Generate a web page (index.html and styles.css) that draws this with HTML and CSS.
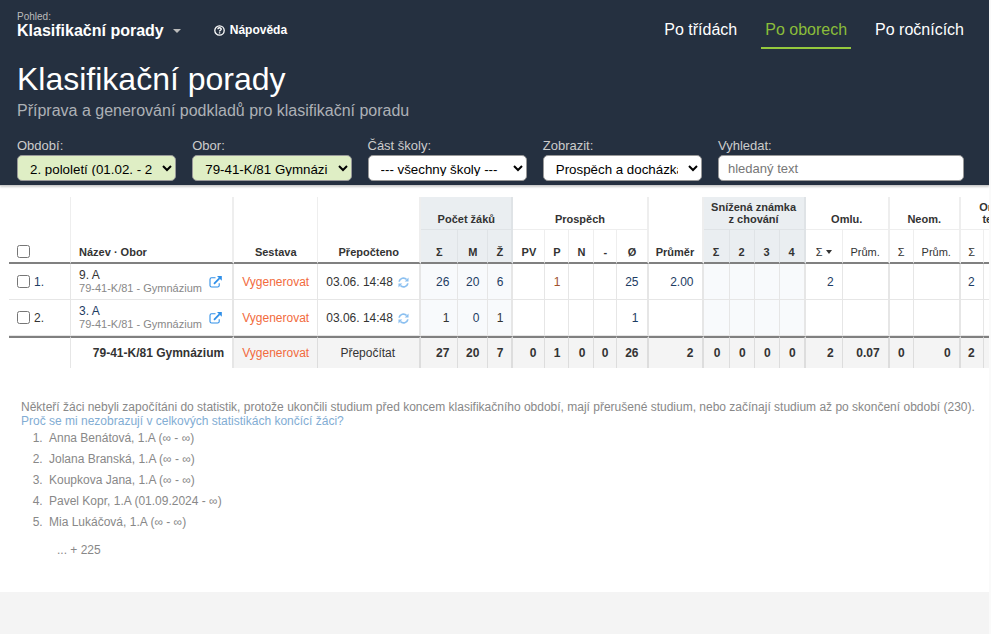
FILE: index.html
```html
<!DOCTYPE html>
<html lang="cs">
<head>
    <meta charset="UTF-8">
    <meta name="viewport" content="width=device-width, initial-scale=1.0">
    <title>Klasifikační porady</title>
    <link rel="stylesheet" href="styles.css">
</head>
<body>

<svg class="sprite" aria-hidden="true">
    <symbol id="i-open" viewBox="0 0 13 12">
        <path d="M6.5 1.8H2.6a1.6 1.6 0 0 0-1.6 1.6v6a1.6 1.6 0 0 0 1.6 1.6h6a1.6 1.6 0 0 0 1.6-1.6V7.2" fill="none" stroke="currentColor" stroke-width="1.1"/>
        <path d="M5 7.8 10.6 2.2" stroke="currentColor" stroke-width="1.8"/>
        <path d="M8 0h4.8v4.8z" fill="currentColor"/>
    </symbol>
    <symbol id="i-refresh" viewBox="0 0 12 12">
        <path d="M1.2 5A4.8 4.8 0 0 1 9.4 2.7M10.8 7a4.8 4.8 0 0 1-8.2 2.3" fill="none" stroke="currentColor" stroke-width="1.9"/>
        <path d="M11.5.6v4.2H7.3zM.5 11.4V7.2h4.2z" fill="currentColor"/>
    </symbol>
</svg>

<header class="top">
    <div class="bar">
        <div class="view">
            <span class="view-label">Pohled:</span>
            <button type="button" class="view-name">Klasifikační porady <i class="caret"></i></button>
        </div>
        <a class="help" href="#">
            <svg width="11" height="11" viewBox="0 0 11 11" aria-hidden="true">
                <circle cx="5.5" cy="5.5" r="4.7" fill="none" stroke="currentColor" stroke-width="1.3"/>
                <path d="M3.9 4.3c0-2 3.3-2 3.3-.1 0 1.1-1.6 1.1-1.6 2.3M5.6 7.3v1.3" fill="none" stroke="currentColor" stroke-width="1.4"/>
            </svg>
            Nápověda
        </a>
        <nav class="tabs">
            <a href="#">Po třídách</a>
            <a href="#" class="active">Po oborech</a>
            <a href="#">Po ročnících</a>
        </nav>
    </div>
    <h1>Klasifikační porady</h1>
    <p class="subtitle">Příprava a generování podkladů pro klasifikační poradu</p>
    <form class="filters">
        <div class="field">
            <label for="obdobi">Období:</label>
            <select id="obdobi" class="set"><option>2. pololetí (01.02. - 29.08.)</option></select>
        </div>
        <div class="field">
            <label for="obor">Obor:</label>
            <select id="obor" class="set"><option>79-41-K/81 Gymnázium</option></select>
        </div>
        <div class="field">
            <label for="skola">Část školy:</label>
            <select id="skola"><option>--- všechny školy ---</option></select>
        </div>
        <div class="field">
            <label for="zobrazit">Zobrazit:</label>
            <select id="zobrazit"><option>Prospěch a docházka</option></select>
        </div>
        <div class="field search">
            <label for="hledat">Vyhledat:</label>
            <input type="text" id="hledat" placeholder="hledaný text">
        </div>
    </form>
</header>

<main>
    <div class="table-wrap">
        <table>
            <colgroup>
                <col class="w62"><col class="w163"><col class="w84"><col class="w103">
                <col class="w37"><col class="w30"><col class="w25">
                <col class="w32"><col class="w24"><col class="w25"><col class="w23"><col class="w31">
                <col class="w55">
                <col class="w26"><col class="w25"><col class="w25"><col class="w26">
                <col class="w37"><col class="w47"><col class="w24"><col class="w47"><col class="w23"><col class="w52">
            </colgroup>
            <thead>
                <tr class="groups">
                    <th rowspan="2" class="left check"><input type="checkbox" aria-label="Vybrat vše"></th>
                    <th rowspan="2" class="left end">Název · Obor</th>
                    <th rowspan="2">Sestava</th>
                    <th rowspan="2" class="end">Přepočteno</th>
                    <th colspan="3" class="group tint end">Počet žáků</th>
                    <th colspan="5" class="group end">Prospěch</th>
                    <th rowspan="2" class="end">Průměr</th>
                    <th colspan="4" class="group tint end">Snížená známka<br>z chování</th>
                    <th colspan="2" class="group end">Omlu.</th>
                    <th colspan="2" class="group end">Neom.</th>
                    <th colspan="2" class="group end">Omluv.<br>teorie</th>
                </tr>
                <tr>
                    <th class="tint">Σ</th>
                    <th class="tint">M</th>
                    <th class="tint end">Ž</th>
                    <th>PV</th>
                    <th>P</th>
                    <th>N</th>
                    <th>-</th>
                    <th class="end">Ø</th>
                    <th class="tint">Σ</th>
                    <th class="tint">2</th>
                    <th class="tint">3</th>
                    <th class="tint end">4</th>
                    <th class="light">Σ <i class="caret dark"></i></th>
                    <th class="light end">Prům.</th>
                    <th class="light">Σ</th>
                    <th class="light end">Prům.</th>
                    <th class="light">Σ</th>
                    <th class="light end"></th>
                </tr>
            </thead>
            <tbody>
                <tr>
                    <td class="left check"><input type="checkbox" id="r1"><label for="r1" class="link">1.</label></td>
                    <td class="left end">
                        <div class="name">
                            <div>9. A<small>79-41-K/81 - Gymnázium</small></div>
                            <a href="#" class="open" aria-label="Otevřít"><svg width="13" height="12"><use href="#i-open"/></svg></a>
                        </div>
                    </td>
                    <td class="mid"><a href="#" class="gen">Vygenerovat</a></td>
                    <td class="mid end">03.06. 14:48 <svg class="refresh" width="11" height="11"><use href="#i-refresh"/></svg></td>
                    <td class="pale link">26</td>
                    <td class="pale link">20</td>
                    <td class="pale link end">6</td>
                    <td></td>
                    <td class="mark">1</td>
                    <td></td>
                    <td></td>
                    <td class="link end">25</td>
                    <td class="link end">2.00</td>
                    <td class="pale"></td>
                    <td class="pale"></td>
                    <td class="pale"></td>
                    <td class="pale end"></td>
                    <td class="link">2</td>
                    <td class="end"></td>
                    <td></td>
                    <td class="end"></td>
                    <td class="link">2</td>
                    <td class="end"></td>
                </tr>
                <tr>
                    <td class="left check"><input type="checkbox" id="r2"><label for="r2">2.</label></td>
                    <td class="left end">
                        <div class="name">
                            <div><span class="link">3. A</span><small>79-41-K/81 - Gymnázium</small></div>
                            <a href="#" class="open" aria-label="Otevřít"><svg width="13" height="12"><use href="#i-open"/></svg></a>
                        </div>
                    </td>
                    <td class="mid"><a href="#" class="gen">Vygenerovat</a></td>
                    <td class="mid end">03.06. 14:48 <svg class="refresh" width="11" height="11"><use href="#i-refresh"/></svg></td>
                    <td class="pale">1</td>
                    <td class="pale link">0</td>
                    <td class="pale end">1</td>
                    <td></td>
                    <td></td>
                    <td></td>
                    <td></td>
                    <td class="link end">1</td>
                    <td class="end"></td>
                    <td class="pale"></td>
                    <td class="pale"></td>
                    <td class="pale"></td>
                    <td class="pale end"></td>
                    <td></td>
                    <td class="end"></td>
                    <td></td>
                    <td class="end"></td>
                    <td></td>
                    <td class="end"></td>
                </tr>
            </tbody>
            <tfoot>
                <tr>
                    <td class="blank"></td>
                    <td class="blank end">79-41-K/81 Gymnázium</td>
                    <td class="mid light"><a href="#" class="gen">Vygenerovat</a></td>
                    <td class="mid light end">Přepočítat</td>
                    <td>27</td>
                    <td>20</td>
                    <td class="end">7</td>
                    <td>0</td>
                    <td>1</td>
                    <td>0</td>
                    <td>0</td>
                    <td class="end">26</td>
                    <td class="end">2</td>
                    <td>0</td>
                    <td>0</td>
                    <td>0</td>
                    <td class="end">0</td>
                    <td>2</td>
                    <td class="end">0.07</td>
                    <td>0</td>
                    <td class="end">0</td>
                    <td>2</td>
                    <td class="end"></td>
                </tr>
            </tfoot>
        </table>
    </div>

    <section class="note">
        <p>Někteří žáci nebyli započítáni do statistik, protože ukončili studium před koncem klasifikačního období, mají přerušené studium, nebo začínají studium až po skončení období (230).</p>
        <a href="#">Proč se mi nezobrazují v celkových statistikách končící žáci?</a>
        <ol>
            <li>Anna Benátová, 1.A (∞ - ∞)</li>
            <li>Jolana Branská, 1.A (∞ - ∞)</li>
            <li>Koupkova Jana, 1.A (∞ - ∞)</li>
            <li>Pavel Kopr, 1.A (01.09.2024 - ∞)</li>
            <li>Mia Lukáčová, 1.A (∞ - ∞)</li>
        </ol>
        <p class="more">... + 225</p>
    </section>
</main>

</body>
</html>
```
FILE: styles.css
```css
* {
    box-sizing: border-box;
}

html {
    background-color: #fafafa;
}

body {
    margin: 0 2px 0 0;
    min-height: 100vh;
    background-color: #f4f4f4;
    color: #333;
    font-family: "Liberation Sans", Arial, sans-serif;
    font-size: 12px;
}

a {
    color: inherit;
    text-decoration: none;
}

.sprite {
    display: none;
}

.top {
    background-color: #253040;
    color: #fff;
    padding: 11px 17px 4px;
    border-bottom: 1px solid #ccc;
    box-shadow: 0 1px 2px rgba(0, 0, 0, 0.2);
    position: relative;
}

.bar {
    display: flex;
    align-items: flex-start;
    height: 49px;
}

.view-label {
    display: block;
    font-size: 10px;
    line-height: 12px;
    color: #bbb;
}

.view-name {
    display: flex;
    align-items: center;
    gap: 9px;
    padding: 0;
    border: none;
    background: none;
    color: #fff;
    font-family: inherit;
    font-size: 16px;
    font-weight: bold;
    line-height: 16px;
}

.caret {
    display: inline-block;
    border: 4px solid transparent;
    border-top-color: #bbb;
    border-bottom: none;
}

.caret.dark {
    border-width: 4px 3px 0;
    border-top-color: #333;
    vertical-align: 2px;
}

.help {
    display: flex;
    align-items: center;
    gap: 5px;
    margin-left: 33px;
    padding-top: 12px;
    font-weight: bold;
    line-height: 14px;
}

.tabs {
    display: flex;
    gap: 20px;
    margin-left: auto;
    margin-right: 4px;
}

.tabs a {
    padding: 9px 4px 7px;
    font-size: 16px;
    line-height: 20px;
}

.tabs .active {
    color: #8bbd3a;
    border-bottom: 2px solid #95c93d;
}

h1 {
    margin: 0;
    font-size: 32px;
    font-weight: normal;
    line-height: 38px;
}

.subtitle {
    margin: 3px 0 17px;
    font-size: 16px;
    line-height: 20px;
    color: #adb1b6;
}

.filters {
    display: flex;
    gap: 16px;
    padding-right: 8px;
}

.field {
    flex: 1;
    min-width: 0;
}

.field.search {
    flex: 0 0 246px;
}

.field label {
    display: block;
    margin-bottom: 2px;
    font-size: 13px;
    line-height: 15px;
    color: #ccc;
}

.field select,
.field input {
    display: block;
    width: 100%;
    height: 26px;
    border: 1px solid #999;
    border-radius: 5px;
    background-color: #fff;
    color: #000;
    font-family: inherit;
}

.field select {
    padding: 5px 7px 4px 8px;
}

.field .set {
    background-color: #dfeec5;
}

.field input {
    padding: 0 9px;
    font-size: 13px;
}

.field input::placeholder {
    color: #777;
}

main {
    background-color: #fff;
    padding: 11px 0 35px;
}

.table-wrap {
    margin-left: 9px;
    overflow: hidden;
}

table {
    width: 1027px;
    table-layout: fixed;
    border-collapse: separate;
    border-spacing: 0;
}

.w23 { width: 23px; }
.w24 { width: 24px; }
.w25 { width: 25px; }
.w26 { width: 26px; }
.w30 { width: 30px; }
.w31 { width: 31px; }
.w32 { width: 32px; }
.w37 { width: 37px; }
.w47 { width: 47px; }
.w52 { width: 52px; }
.w55 { width: 55px; }
.w62 { width: 62px; }
.w84 { width: 84px; }
.w103 { width: 103px; }
.w163 { width: 163px; }

th,
td {
    padding: 0;
    border-right: 1px solid #e6e6e6;
    white-space: nowrap;
}

th.end,
td.end {
    border-right-width: 2px;
}

th {
    padding-bottom: 4px;
    border-right-color: #eee;
    border-bottom: 2px solid #808080;
    font-size: 11px;
    line-height: 12px;
    text-align: center;
    vertical-align: bottom;
}

thead tr {
    height: 34px;
}

thead .groups {
    height: 33px;
}

thead .group {
    border-bottom: 1px solid #eee;
}

.tint {
    background-color: #eaeef1;
    border-right-color: #dfe3e6;
}

thead .tint.group {
    border-bottom-color: #dfe3e6;
}

.light {
    font-weight: normal;
}

td {
    height: 36px;
    padding-right: 8px;
    border-bottom: 1px solid #e6e6e6;
    text-align: right;
}

.pale {
    background-color: #f8fafc;
}

.link {
    color: #1d3c63;
}

.mark {
    color: #a0522d;
}

th.left,
td.left {
    padding-left: 8px;
    text-align: left;
}

td.mid {
    padding-right: 0;
    text-align: center;
}

td.mid.end {
    padding-right: 2px;
}

.check input {
    width: 13px;
    height: 13px;
    margin: 0 4px 0 0;
    vertical-align: middle;
}

.check label {
    vertical-align: middle;
}

.name {
    display: flex;
    align-items: center;
    justify-content: space-between;
    padding-right: 2px;
    line-height: 13px;
}

.name small {
    display: block;
    font-size: 11px;
    color: #888;
}

.open {
    color: #2f8fe8;
}

.open svg {
    display: block;
}

.refresh {
    margin-left: 2px;
    color: #8cc0f0;
    vertical-align: -2px;
}

.gen {
    color: #f26b3d;
}

tfoot td {
    height: 32px;
    border-top: 2px solid #808080;
    border-bottom: none;
    border-right-color: #ddd;
    background-color: #f4f4f4;
    font-weight: bold;
}

tfoot .light {
    font-weight: normal;
}

tfoot .blank {
    background-color: #fff;
    border-right-color: #e6e6e6;
}

.note {
    padding: 32px 0 0 21px;
    color: #888;
    line-height: 14px;
}

.note p {
    margin: 0;
    white-space: nowrap;
}

.note a {
    color: #82add4;
}

.note ol {
    margin: 0;
    padding-left: 25px;
}

.note li {
    padding-left: 3px;
    line-height: 21px;
}

.note .more {
    padding: 10px 0 0 36px;
}
```
